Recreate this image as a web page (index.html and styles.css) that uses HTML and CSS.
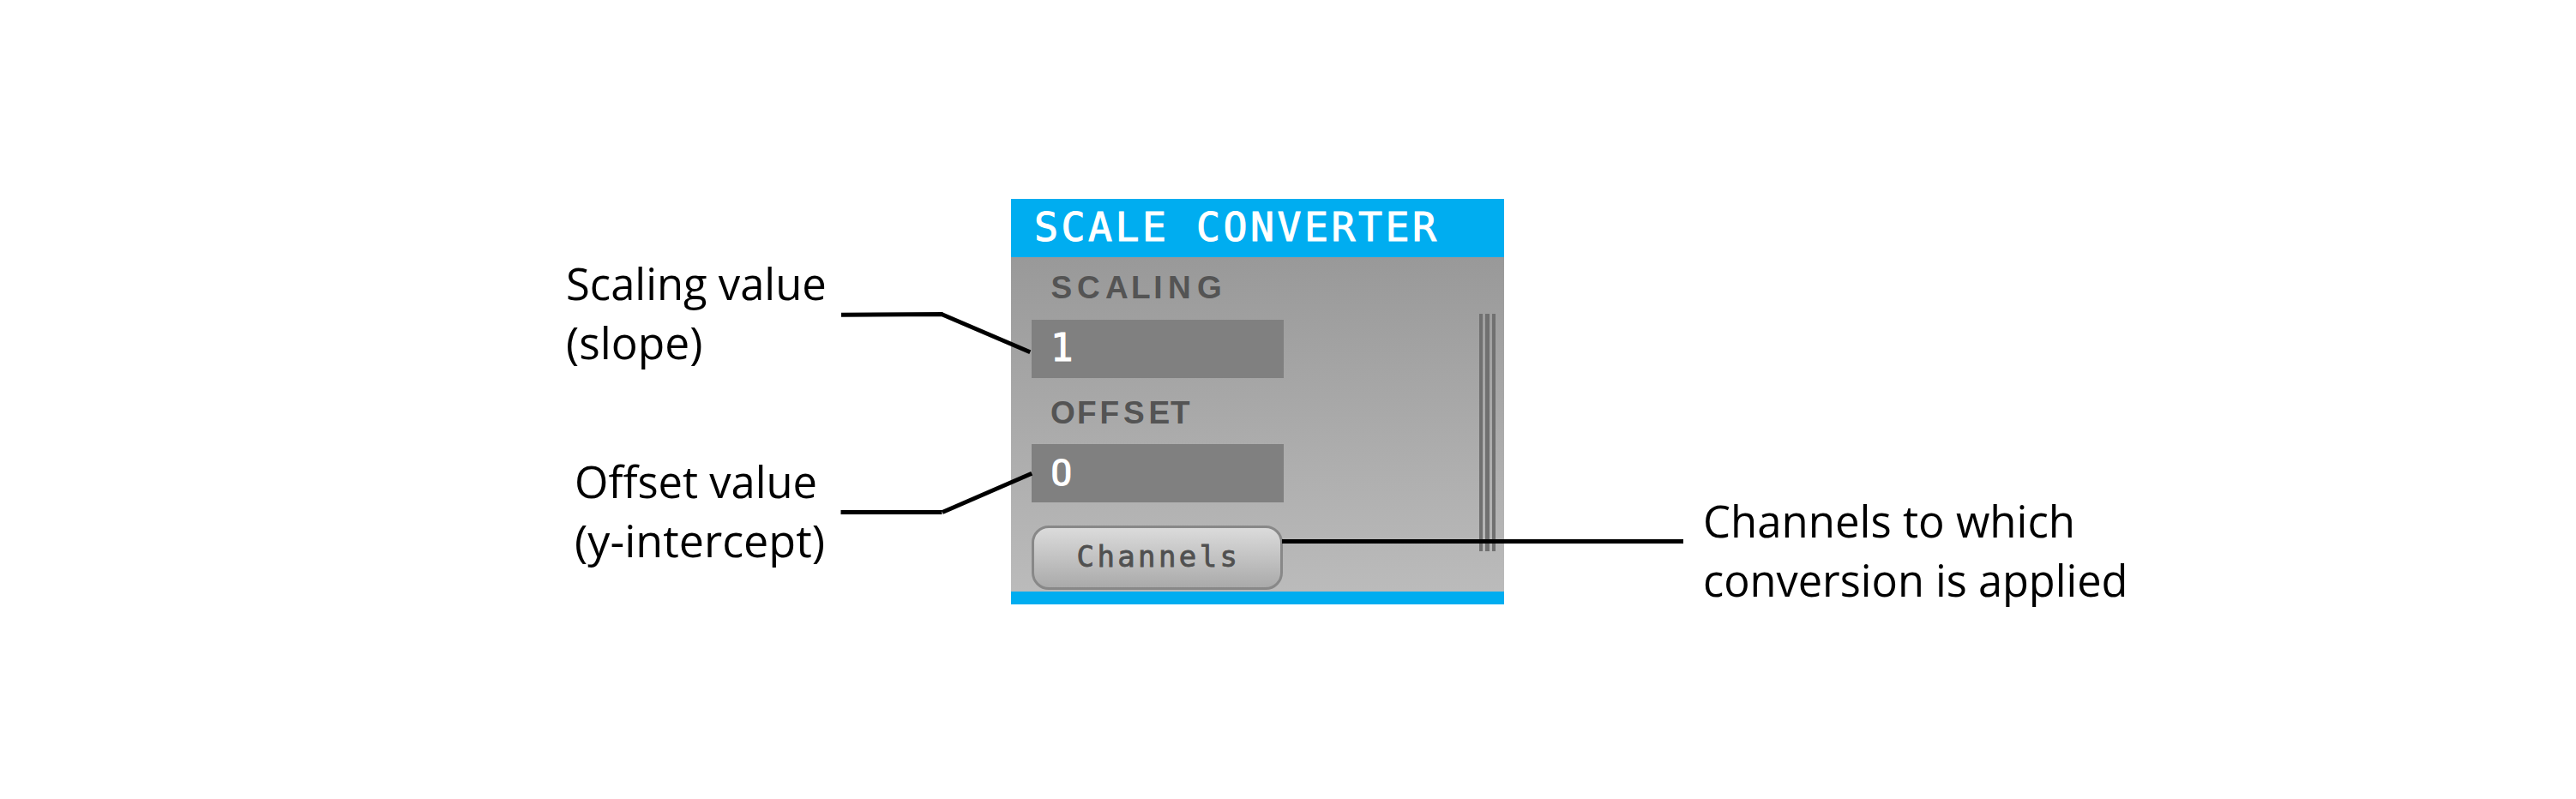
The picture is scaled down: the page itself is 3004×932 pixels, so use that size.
FILE: index.html
```
<!DOCTYPE html>
<html lang="en">
<head>
<meta charset="utf-8">
<title>Scale Converter</title>
<link rel="stylesheet" href="styles.css">
</head>
<body>
<main class="figure">
  <aside class="notes notes-left">
    <p class="note note-scaling"><span class="line l1">Scaling value</span><span class="line l2">(slope)</span></p>
    <p class="note note-offset"><span class="line l3">Offset value</span><span class="line l4">(y-intercept)</span></p>
  </aside>
  <section class="panel">
    <header class="panel-header"><span class="title">SCALE CONVERTER</span></header>
    <div class="panel-body">
      <div class="controls">
        <svg class="label" width="294" height="73"><text y="48" x="22.5 53 86 116 142.3 159 193">SCALING</text></svg>
        <div class="field one">1</div>
        <svg class="label label-offset" width="294" height="77"><text y="53" x="22 53 79.5 107 136.5 162">OFFSET</text></svg>
        <div class="field">0</div>
        <div class="button"><span class="button-text">Channels</span></div>
      </div>
      <div class="grip"><i></i><i></i><i></i></div>
    </div>
    <footer class="panel-footer"></footer>
  </section>
  <aside class="notes notes-right">
    <p class="note"><span class="line l5">Channels to which</span><span class="line l6">conversion is applied</span></p>
  </aside>
  <svg class="connectors" width="3004" height="932" viewBox="0 0 3004 932">
    <path d="M981 367.3L1099.5 366.6M1098 366.5L1201.3 410.8"/>
    <path d="M980.5 597.5H1098.5M1099 597.5L1203.2 552.3"/>
    <path d="M1495 631.5H1963"/>
  </svg>
</main>
</body>
</html>
```
FILE: styles.css
```
* { box-sizing: border-box; }
body { margin: 0; background: #fff; }
.figure {
  position: relative;
  display: grid;
  grid-template-columns: 1179px 575px 1fr;
  width: 3004px;
  height: 932px;
  overflow: hidden;
}
.notes { display: flex; flex-direction: column; align-items: flex-start; }
.notes-left { padding: 296px 0 0 660px; gap: 93px; }
.notes-right { padding: 573px 0 0 232px; }
.note {
  margin: 0;
  font: 51px/69px "Open Sans", sans-serif;
  color: #000;
  white-space: nowrap;
}
.note-offset { padding-left: 10px; }
.line { display: block; width: max-content; transform-origin: 0 50%; }
.l1 { transform: scaleX(.995); }
.l2 { transform: scaleX(1.01); }
.l3 { transform: scaleX(.993); }
.l4 { transform: scaleX(1.02); }
.l5 { transform: scaleX(.998); }
.l6 { transform: scaleX(.99); }
.panel { margin-top: 232px; height: 473px; display: flex; flex-direction: column; }
.panel-header {
  height: 68px;
  background: #00adf0;
  padding-left: 27px;
  display: flex;
  align-items: center;
}
.title {
  font: 46.5px/66px "DejaVu Sans Mono", monospace;
  height: 68px;
  letter-spacing: 3.5px;
  color: #fff;
  white-space: pre;
  -webkit-text-stroke: 1px #fff;
}
.panel-body {
  height: 390px;
  display: flex;
  justify-content: space-between;
  padding: 0 10px 0 24px;
  background: linear-gradient(#999, #bbb);
}
.controls { width: 294px; }
.label {
  display: block;
  font: bold 37px "Liberation Sans", sans-serif;
  fill: #545454;
}
.field {
  height: 68px;
  padding-left: 22px;
  background: #808080;
  color: #fff;
  font: 500 45px/67px Roboto, sans-serif;
}
.field.one { font: 44px/66px "DejaVu Sans Mono", monospace; -webkit-text-stroke: 1px #fff; }
.button {
  width: 293px;
  height: 75px;
  margin-top: 27px;
  padding-left: 3px;
  border: 3px solid #888;
  border-radius: 20px;
  background: linear-gradient(#dbdbdb, #aaa);
  text-align: center;
}
.button-text {
  font: 34px/67px "DejaVu Sans Mono", monospace;
  letter-spacing: 3.4px;
  color: #505050;
  -webkit-text-stroke: .8px #505050;
}
.grip { display: flex; gap: 3px; height: 277px; margin-top: 66px; }
.grip i { width: 4.3px; background: #707070; }
.panel-footer { height: 15px; background: #00adf0; }
.connectors { position: absolute; inset: 0; fill: none; stroke: #000; stroke-width: 5; }
```
